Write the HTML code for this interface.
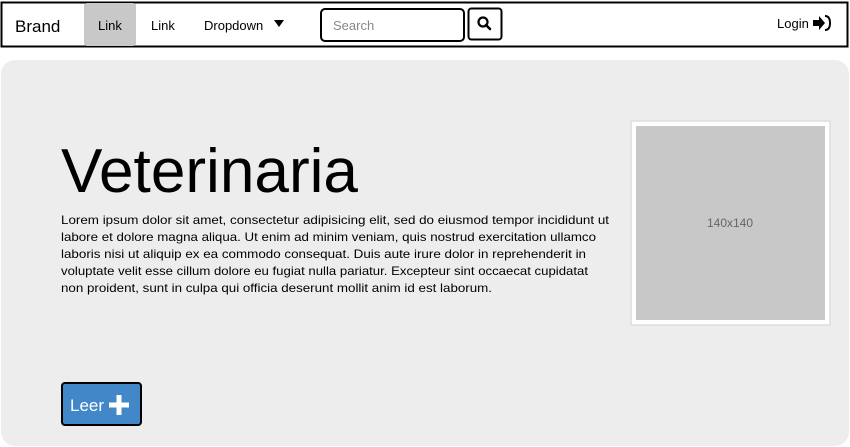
<!DOCTYPE html>
<html><head><meta charset="utf-8"><style>
html,body{margin:0;padding:0;width:850px;height:447px;background:#fff;overflow:hidden;font-family:"Liberation Sans",sans-serif;}
svg{position:absolute;left:0;top:0}
</style></head><body>
<svg width="850" height="447" viewBox="0 0 850 447" font-family="Liberation Sans, sans-serif">
  <rect x="1.5" y="2.5" width="846" height="44" fill="#fff" stroke="#000" stroke-width="2"/>
  <text x="15" y="32" font-size="17" fill="#000">Brand</text>
  <rect x="84" y="3" width="52" height="43" rx="3" fill="#c8c8c8"/>
  <text x="98" y="30" font-size="13" fill="#000">Link</text>
  <text x="151" y="30" font-size="13" fill="#000">Link</text>
  <text x="204" y="30" font-size="13" fill="#000">Dropdown</text>
  <path d="M274 20 L284 20 L279 27 Z" fill="#000"/>
  <rect x="321" y="9" width="143" height="32" rx="4" fill="#fff" stroke="#000" stroke-width="2"/>
  <text x="333" y="30" font-size="13" fill="#888">Search</text>
  <rect x="468.5" y="8.5" width="33" height="31" rx="3" fill="#fff" stroke="#000" stroke-width="2"/>
  <circle cx="483" cy="22" r="4.5" fill="none" stroke="#000" stroke-width="2.2"/>
  <path d="M486 25 L490 29" stroke="#000" stroke-width="2.6" stroke-linecap="round"/>
  <text x="777" y="28" font-size="13" fill="#000">Login</text>
  <path d="M813 20 h6 v-4 l6 7 l-6 7 v-4 h-6 z" fill="#000"/>
  <path d="M825 16 q5 0 5 7 q0 7 -5 7" fill="none" stroke="#000" stroke-width="2"/>
  <rect x="1" y="60" width="848" height="386" rx="14" fill="#ededed"/>
  <text x="61" y="192" font-size="62" fill="#000" textLength="297" lengthAdjust="spacingAndGlyphs">Veterinaria</text>
  <g font-size="12" fill="#000">
    <text x="61" y="224" textLength="548" lengthAdjust="spacingAndGlyphs">Lorem ipsum dolor sit amet, consectetur adipisicing elit, sed do eiusmod tempor incididunt ut</text>
    <text x="61" y="241" textLength="535" lengthAdjust="spacingAndGlyphs">labore et dolore magna aliqua. Ut enim ad minim veniam, quis nostrud exercitation ullamco</text>
    <text x="61" y="258" textLength="525" lengthAdjust="spacingAndGlyphs">laboris nisi ut aliquip ex ea commodo consequat. Duis aute irure dolor in reprehenderit in</text>
    <text x="61" y="275" textLength="527" lengthAdjust="spacingAndGlyphs">voluptate velit esse cillum dolore eu fugiat nulla pariatur. Excepteur sint occaecat cupidatat</text>
    <text x="61" y="292" textLength="431" lengthAdjust="spacingAndGlyphs">non proident, sunt in culpa qui officia deserunt mollit anim id est laborum.</text>
  </g>
  <rect x="631" y="121" width="199" height="204" fill="#fff" stroke="#ddd" stroke-width="1.5"/>
  <rect x="636" y="126" width="189" height="194" fill="#c8c8c8"/>
  <text x="730" y="227" font-size="12" fill="#666" text-anchor="middle">140x140</text>
  <rect x="62" y="383" width="79" height="42" rx="3" fill="#4288c8" stroke="#000" stroke-width="2"/>
  <text x="70" y="411" font-size="17" fill="#fff">Leer</text>
  <path d="M109 405 h20 M119 395 v20" stroke="#fff" stroke-width="5"/>
</svg>
</body></html>
